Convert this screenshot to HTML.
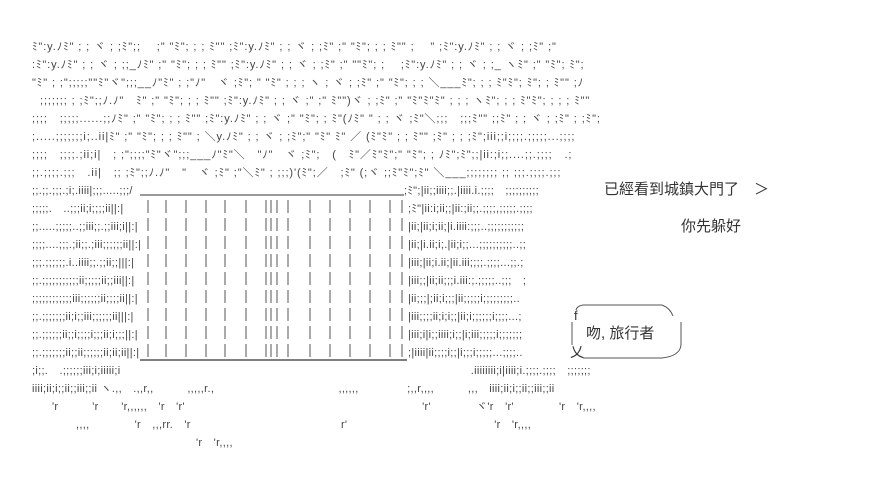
<!DOCTYPE html>
<html><head><meta charset="utf-8"><style>
body{margin:0;width:871px;height:478px;background:#fff;position:relative;overflow:hidden;font-family:"Liberation Sans","Noto Sans CJK TC",sans-serif;color:#444}
.l{position:absolute;white-space:pre;font-size:11px;line-height:14px;letter-spacing:0.3px}
.w{letter-spacing:0.9px}
.t{position:absolute;white-space:pre;font-size:15px;color:#333;font-family:"Liberation Sans","Noto Sans CJK TC",sans-serif}
</style></head><body>
<div class="l w" style="left:32px;top:40px">ﾐ&quot;:y.ﾉﾐ&quot; ; ; ヾ ; ;ﾐ&quot;;;　 ;&quot; &quot;ﾐ&quot;; ; ; ﾐ&quot;&quot; ;ﾐ&quot;:y.ﾉﾐ&quot; ; ; ヾ ; ;ﾐ&quot; ;&quot; &quot;ﾐ&quot;; ; ; ﾐ&quot;&quot; ;　 &quot; ;ﾐ&quot;:y.ﾉﾐ&quot; ; ; ヾ ; ;ﾐ&quot; ;&quot;</div>
<div class="l w" style="left:32px;top:58px">:ﾐ&quot;:y.ﾉﾐ&quot; ; ; ヾ ; ;;_ﾉﾐ&quot; ;&quot; &quot;ﾐ&quot;; ; ; ﾐ&quot;&quot; ;ﾐ&quot;:y.ﾉﾐ&quot; ; ; ヾ ; ;ﾐ&quot; ;&quot; &quot;&quot;ﾐ&quot;; ;　 ;ﾐ&quot;:y.ﾉﾐ&quot; ; ; ヾ ; ;_ ヽﾐ&quot; ;&quot; &quot;ﾐ&quot;; ﾐ&quot;;</div>
<div class="l w" style="left:32px;top:76px">&quot;ﾐ&quot; ; ;&quot;;;;;;&quot;&quot;ﾐ&quot;ヾ&quot;;;;__ﾉ&quot;ﾐ&quot; ; ;&quot;ﾉ&quot;　ヾ ;ﾐ&quot;; &quot; &quot;ﾐ&quot; ; ; ; ヽ ; ヾ ; ;ﾐ&quot; ;&quot; &quot;ﾐ&quot;; ; ; ＼___ﾐ&quot;; ; ; ﾐ&quot;ﾐ&quot;; ﾐ&quot;; ; ﾐ&quot;&quot; ;ﾉ</div>
<div class="l w" style="left:40px;top:94px">;;;;;;; ; ;ﾐ&quot;;;ﾉ.ﾉ&quot;　ﾐ&quot; ;&quot; &quot;ﾐ&quot;; ; ; ﾐ&quot;&quot; ;ﾐ&quot;:y.ﾉﾐ&quot; ; ; ヾ ;&quot; ;&quot; ﾐ&quot;&quot;)ヾ ; ;ﾐ&quot; ;&quot; &quot;ﾐ&quot;ﾐ&quot;ﾐ&quot; ; ; ; ヽﾐ&quot;; ; ; ﾐ&quot;ﾐ&quot;; ; ; ; ﾐ&quot;&quot;</div>
<div class="l w" style="left:32px;top:112px">;;;;　;;;;;......;;ﾉﾐ&quot; ;&quot; &quot;ﾐ&quot;; ; ; ﾐ&quot;&quot; ;ﾐ&quot;:y.ﾉﾐ&quot; ; ; ヾ ;&quot; &quot;ﾐ&quot;; ; ﾐ&quot;(ﾉﾐ&quot; &quot; ; ; ヾ ;ﾐ&quot;＼;;;　;;;ﾐ&quot;&quot; ;;ﾐ&quot; ; ; ヾ ; ;ﾐ&quot; ; ;ﾐ&quot;;</div>
<div class="l w" style="left:32px;top:130px">;.....;;;;;;;i;..ii|ﾐ&quot; ;&quot; &quot;ﾐ&quot;; ; ; ﾐ&quot;&quot; ; ＼y.ﾉﾐ&quot; ; ; ヾ ; ;ﾐ&quot;;&quot; &quot;ﾐ&quot; ﾐ&quot; ／ (ﾐ&quot;ﾐ&quot; ; ; ﾐ&quot;&quot; ;ﾐ&quot; ; ; ;ﾐ&quot;;iii;;i;;;;.;;;;;...;;;;</div>
<div class="l w" style="left:32px;top:148px">;;;;　;;;;.;ii;i|　; ;&quot;;;;;&quot;ﾐ&quot;ヾ&quot;;;;___ﾉ&quot;ﾐ&quot;＼　&quot;ﾉ&quot;　ヾ ;ﾐ&quot;;　(　ﾐ&quot;／ﾐ&quot;ﾐ&quot;;&quot; &quot;ﾐ&quot;; ; ﾉﾐ&quot;;ﾐ&quot;;;|ii:;i;;....;;.;;;;　.;</div>
<div class="l w" style="left:32px;top:166px">;;.;;;;.;;;　.ii|　;; ;ﾐ&quot;;;ﾉ.ﾉ&quot;　&quot;　ヾ ;ﾐ&quot; ;&quot;＼ﾐ&quot; ; ;;;)'(ﾐ&quot;;／　;ﾐ&quot; (;ヾ ;;ﾐ&quot;ﾐ&quot;;ﾐ&quot; ＼___;;;;;;;; ;; ;;;.;;;;.;;;</div>
<div class="l" style="left:32px;top:184px">;;.;;.;;;.;i;.iiii|;;;.....;;;/</div>
<div class="l" style="left:404px;top:184px">;ﾐ&quot;;|ii;;iiii;;.|iiii.i.;;;;　;;;;;;;;;;</div>
<svg style="position:absolute;left:0;top:0" width="871" height="478">
<g stroke="#555" stroke-width="1" fill="none">
<line x1="140" y1="195" x2="404" y2="195" stroke="#333"/>
<line x1="140" y1="360" x2="407" y2="360" stroke="#333" stroke-width="1.2"/>
<g stroke-dasharray="13 5">
<line x1="148" y1="200" x2="148" y2="358"/>
<line x1="166" y1="200" x2="166" y2="358"/>
<line x1="186" y1="200" x2="186" y2="358"/>
<line x1="206" y1="200" x2="206" y2="358"/>
<line x1="225" y1="200" x2="225" y2="358"/>
<line x1="246" y1="200" x2="246" y2="358"/>
<line x1="266" y1="200" x2="266" y2="358"/>
<line x1="271" y1="200" x2="271" y2="358"/>
<line x1="277" y1="200" x2="277" y2="358"/>
<line x1="288" y1="200" x2="288" y2="358"/>
<line x1="310" y1="200" x2="310" y2="358"/>
<line x1="330" y1="200" x2="330" y2="358"/>
<line x1="350" y1="200" x2="350" y2="358"/>
<line x1="370" y1="200" x2="370" y2="358"/>
<line x1="390" y1="200" x2="390" y2="358"/>
<line x1="402" y1="200" x2="402" y2="358"/>
</g>
<line x1="583" y1="305" x2="662" y2="305"/>
<line x1="583" y1="358" x2="662" y2="358"/>
<line x1="572" y1="322" x2="572" y2="345"/>
<line x1="681" y1="322" x2="681" y2="345"/>
<path d="M583 305 Q577 306 576 310"/>
<path d="M662 305 Q670 308 673 316"/>
<path d="M681 345 Q680 356 662 358"/>
</g></svg>
<div class="l" style="left:32px;top:202px">;;;;;.　..;;;ii;i;;;;ii||:|</div>
<div class="l" style="left:32px;top:220px">;;.....;;;;;..;;iii;;.;;iii;i||:|</div>
<div class="l" style="left:32px;top:238px">;;;;....;;;.;ii;;.;iii;;;;;;ii||:|</div>
<div class="l" style="left:32px;top:256px">;;;.;;;;;;.i..iiii;;.;;ii;;|||:|</div>
<div class="l" style="left:32px;top:274px">;;.;;;;;;;;;;;ii;;;;;ii;;iii||:|</div>
<div class="l" style="left:32px;top:292px">;;;;;;;;;;;;iii;;;;;;ii;;;;ii||:|</div>
<div class="l" style="left:32px;top:310px">;;.;;;;;;;ii;i;;iii;;;;;;ii|||:|</div>
<div class="l" style="left:32px;top:328px">;;.;;;;;;ii;;i;;;;i;;;ii;i;;;||:|</div>
<div class="l" style="left:32px;top:346px">;;.;;;;;;;ii;;ii;;;;;;ii;ii;ii||:|</div>
<div class="l" style="left:408px;top:202px">;ﾐ&quot;|ii:i;ii;;|ii:;ii;;.;;;;,;;;;;.;;;;</div>
<div class="l" style="left:408px;top:220px">|ii;|ii;i;ii;|i.iiii:;;;..;;;;;;;;;;;</div>
<div class="l" style="left:408px;top:238px">|ii;|i.ii;i;.|ii;i;;...;;;;;;;;;;..;;</div>
<div class="l" style="left:408px;top:256px">|iii;|ii;i.ii;|ii.iii;;;;.;;;;...;;.;</div>
<div class="l" style="left:408px;top:274px">|iii;;|ii;ii;;;i.iii:;.;;;;;..;;;　;</div>
<div class="l" style="left:408px;top:292px">|ii;;;|;ii;i;;;|ii;;;;;i;;;;;;;;;..</div>
<div class="l" style="left:408px;top:310px">|iii;;;;ii;i;i;;|ii;i;;;;;;i;;;;...;</div>
<div class="l" style="left:408px;top:328px">|iii;i|i;;iiii;i;;|i;iii;;;;;i;;;;;;;</div>
<div class="l" style="left:408px;top:346px">;|iiii|ii;;;;i;;|i;;;i;;;;;...;;;;..</div>
<div class="l" style="left:32px;top:364px">;i;;.　.;;;;;;iii;i;iiiii;i　　　　　　　　　　　　　　　　　　　　　　　　　　　　　　　.iiiiiiii;i|iiii;i.;;;;.;;;;　;;;;;;;</div>
<div class="l" style="left:32px;top:382px">iiii;ii;i;;ii;;iii;;ii ヽ.,,　.,,r,,　　　,,,,,r.,　　　　　　　　　　　,,,,,,　　　　 ;,,r,,,,　　　,,,　iiii;ii;i;;ii;;iii;;ii</div>
<div class="l" style="left:52px;top:400px">'r　　　'r　　'r,,,,,,　'r　'r'　　　　　　　　　　　　　　　　　　　　　'r'　　　　ヾ'r　'r'　　　　'r　'r,,,,</div>
<div class="l" style="left:76px;top:418px">,,,,　　　　'r　,,,rr.　'r　　　　　　　　　　　　　 r'　　　　　　　　　　　　　'r　'r,,,,</div>
<div class="l" style="left:196px;top:436px">'r　'r,,,,</div>
<div class="t" style="left:604px;top:178px">已經看到城鎮大門了　＞</div>
<div class="t" style="left:681px;top:215px">你先躲好</div>
<div class="t" style="left:574px;top:308px;font-size:13px">f</div>
<div class="t" style="left:586px;top:322px">吻, 旅行者</div>
<div class="t" style="left:570px;top:342px;font-size:14px">乂</div>
</body></html>
